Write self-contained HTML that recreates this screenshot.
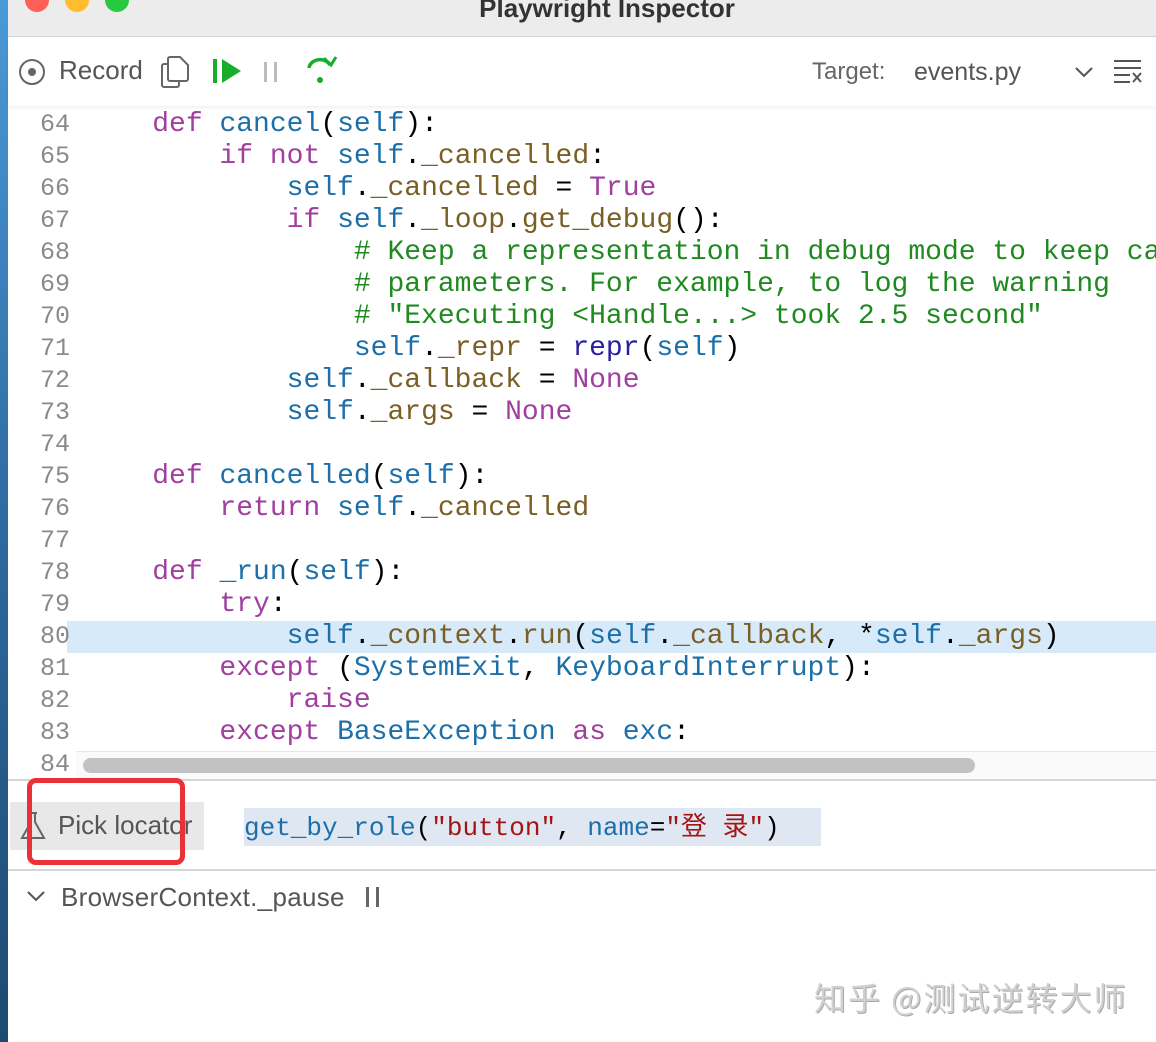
<!DOCTYPE html>
<html><head><meta charset="utf-8"><style>
*{margin:0;padding:0;box-sizing:border-box}
body{width:1156px;height:1042px;overflow:hidden;background:#fff;position:relative;font-family:"Liberation Sans","Noto Sans CJK SC",sans-serif}
.desk{position:absolute;left:0;top:0;width:8px;height:1042px;background:linear-gradient(#4a9ad8,#2d6aa0 50%,#1d4a70)}
.title{position:absolute;left:8px;top:0;right:0;height:37px;background:#ececec;border-bottom:1px solid #d4d4d4}
.dot{position:absolute;top:-12px;width:24px;height:24px;border-radius:50%}
.tt{position:absolute;left:0;right:0;top:-7px;text-align:center;font-size:26px;font-weight:bold;color:#333;padding-left:50px}
.tb{position:absolute;left:8px;top:38px;right:0;height:68px;background:#fff;box-shadow:0 2px 4px rgba(0,0,0,.06)}
.code{position:absolute;left:8px;top:109px;right:0;height:671px;overflow:hidden}
.ln{position:absolute;left:0;height:32px;width:1148px;line-height:32px;white-space:pre;font-family:"Liberation Mono",monospace;font-size:28px;color:#000}
.num{position:absolute;left:0;width:62px;text-align:right;color:#8a8a8a;font-size:25px}
.tx{position:absolute;left:77px}
.k{color:#a03fa0}.s{color:#1c6fa8}.a{color:#7a5f25}.c{color:#208a20}.r{color:#2a1ea0}.q{color:#a31515}
.hl{background:#d7eafa}
</style></head><body>
<div class="desk"></div>
<div class="title">
<div class="dot" style="left:17px;background:#fe5f57"></div>
<div class="dot" style="left:57px;background:#febc2e"></div>
<div class="dot" style="left:97px;background:#28c840"></div>
<div class="tt">Playwright Inspector</div>
</div>
<div class="tb">
<svg style="position:absolute;left:10px;top:20px" width="28" height="28"><circle cx="14" cy="14" r="12" fill="none" stroke="#666" stroke-width="2"/><circle cx="14" cy="14" r="4" fill="#666"/></svg>
<div style="position:absolute;left:51px;top:17px;font-size:26px;color:#555">Record</div>
<svg style="position:absolute;left:152px;top:17px" width="30" height="34" fill="none" stroke="#666" stroke-width="2"><path d="M10 2h10l8 8v14a2 2 0 0 1-2 2H10a2 2 0 0 1-2-2V4a2 2 0 0 1 2-2z"/><path d="M8 9H4a2 2 0 0 0-2 2v19a2 2 0 0 0 2 2h13a2 2 0 0 0 2-2v-4"/></svg>
<svg style="position:absolute;left:203px;top:19px" width="32" height="28"><rect x="2" y="2" width="4" height="24" fill="#1aad2a"/><path d="M11 2l19 12-19 12z" fill="#1aad2a"/></svg>
<svg style="position:absolute;left:254px;top:22px" width="20" height="24"><rect x="2" y="2" width="3" height="20" fill="#bbb"/><rect x="12" y="2" width="3" height="20" fill="#bbb"/></svg>
<svg style="position:absolute;left:296px;top:16px" width="36" height="32" fill="none" stroke="#1aad2a" stroke-width="3.5"><path d="M5 14a11 9 0 0 1 21-3"/><path d="M20 4l7 7 5-8" stroke-width="3"/><circle cx="16" cy="26" r="3" fill="#1aad2a" stroke="none"/></svg>
<div style="position:absolute;left:804px;top:20px;font-size:24px;color:#666">Target:</div>
<div style="position:absolute;left:906px;top:20px;font-size:25px;color:#555">events.py</div>
<svg style="position:absolute;left:1066px;top:28px" width="20" height="14" fill="none" stroke="#555" stroke-width="2"><path d="M2 2l8 8 8-8"/></svg>
<svg style="position:absolute;left:1104px;top:20px" width="32" height="26" fill="none" stroke="#555" stroke-width="2"><path d="M2 3h27M2 10h27M2 17h16M2 24h16M21 15l8 9M29 15l-8 9"/></svg>
</div>
<div class="code">
<div class="ln" style="top:0"><span class="num">64</span><span class="tx">    <span class="k">def</span> <span class="s">cancel</span>(<span class="s">self</span>):</span></div>
<div class="ln" style="top:32px"><span class="num">65</span><span class="tx">        <span class="k">if</span> <span class="k">not</span> <span class="s">self</span>.<span class="a">_cancelled</span>:</span></div>
<div class="ln" style="top:64px"><span class="num">66</span><span class="tx">            <span class="s">self</span>.<span class="a">_cancelled</span> = <span class="k">True</span></span></div>
<div class="ln" style="top:96px"><span class="num">67</span><span class="tx">            <span class="k">if</span> <span class="s">self</span>.<span class="a">_loop</span>.<span class="a">get_debug</span>():</span></div>
<div class="ln" style="top:128px"><span class="num">68</span><span class="tx c">                # Keep a representation in debug mode to keep callback and</span></div>
<div class="ln" style="top:160px"><span class="num">69</span><span class="tx c">                # parameters. For example, to log the warning</span></div>
<div class="ln" style="top:192px"><span class="num">70</span><span class="tx c">                # "Executing &lt;Handle...&gt; took 2.5 second"</span></div>
<div class="ln" style="top:224px"><span class="num">71</span><span class="tx">                <span class="s">self</span>.<span class="a">_repr</span> = <span class="r">repr</span>(<span class="s">self</span>)</span></div>
<div class="ln" style="top:256px"><span class="num">72</span><span class="tx">            <span class="s">self</span>.<span class="a">_callback</span> = <span class="k">None</span></span></div>
<div class="ln" style="top:288px"><span class="num">73</span><span class="tx">            <span class="s">self</span>.<span class="a">_args</span> = <span class="k">None</span></span></div>
<div class="ln" style="top:320px"><span class="num">74</span></div>
<div class="ln" style="top:352px"><span class="num">75</span><span class="tx">    <span class="k">def</span> <span class="s">cancelled</span>(<span class="s">self</span>):</span></div>
<div class="ln" style="top:384px"><span class="num">76</span><span class="tx">        <span class="k">return</span> <span class="s">self</span>.<span class="a">_cancelled</span></span></div>
<div class="ln" style="top:416px"><span class="num">77</span></div>
<div class="ln" style="top:448px"><span class="num">78</span><span class="tx">    <span class="k">def</span> <span class="s">_run</span>(<span class="s">self</span>):</span></div>
<div class="ln" style="top:480px"><span class="num">79</span><span class="tx">        <span class="k">try</span>:</span></div>
<div class="ln" style="top:512px"><div class="hl" style="position:absolute;left:59px;right:0;top:0;height:32px"></div><span class="num">80</span><span class="tx">            <span class="s">self</span>.<span class="a">_context</span>.<span class="a">run</span>(<span class="s">self</span>.<span class="a">_callback</span>, *<span class="s">self</span>.<span class="a">_args</span>)</span></div>
<div class="ln" style="top:544px"><span class="num">81</span><span class="tx">        <span class="k">except</span> (<span class="s">SystemExit</span>, <span class="s">KeyboardInterrupt</span>):</span></div>
<div class="ln" style="top:576px"><span class="num">82</span><span class="tx">            <span class="k">raise</span></span></div>
<div class="ln" style="top:608px"><span class="num">83</span><span class="tx">        <span class="k">except</span> <span class="s">BaseException</span> <span class="k">as</span> <span class="s">exc</span>:</span></div>
<div class="ln" style="top:640px"><span class="num">84</span></div>
<div style="position:absolute;left:68px;right:0;top:642px;height:29px;background:#fafafa;border-top:1px solid #e6e6e6"></div>
<div style="position:absolute;left:75px;top:649px;width:892px;height:15px;border-radius:8px;background:#c2c2c2"></div>
</div>
<div style="position:absolute;left:8px;right:0;top:779px;height:2px;background:#d6d6d6"></div>
<div style="position:absolute;left:10px;top:802px;width:194px;height:48px;background:#e8e8e8"></div>
<svg style="position:absolute;left:19px;top:811px" width="28" height="30" fill="none" stroke="#666" stroke-width="2"><path d="M10 2h8M12 2v9L3 27h22L16 11V2"/></svg>
<div style="position:absolute;left:58px;top:810px;font-size:26px;color:#555">Pick locator</div>
<div style="position:absolute;left:244px;top:808px;width:577px;height:38px;background:#dfe8f2;font-family:'Liberation Mono','Noto Sans CJK SC',monospace;font-size:26px;line-height:40px;white-space:pre;color:#000"><span class="s">get_by_role</span>(<span class="q">"button"</span>, <span class="s">name</span>=<span class="q">"登 录"</span>)</div>
<div style="position:absolute;left:27px;top:778px;width:158px;height:87px;border:5px solid #ec3038;border-radius:9px"></div>
<div style="position:absolute;left:8px;right:0;top:869px;height:2px;background:#d6d6d6"></div>
<svg style="position:absolute;left:26px;top:890px" width="20" height="14" fill="none" stroke="#555" stroke-width="2"><path d="M2 2l8 8 8-8"/></svg>
<div style="position:absolute;left:61px;top:882px;font-size:26px;color:#555;letter-spacing:0.3px">BrowserContext._pause</div>
<svg style="position:absolute;left:364px;top:885px" width="20" height="24"><rect x="2" y="2" width="3" height="20" fill="#666"/><rect x="12" y="2" width="3" height="20" fill="#666"/></svg>
<div style="position:absolute;left:814px;top:974px;font-size:32px;letter-spacing:2px;color:#d0d0d0;text-shadow:1px 1px 0 #aaa;font-family:'Noto Sans CJK SC',sans-serif">知乎 @测试逆转大师</div>
</body></html>
